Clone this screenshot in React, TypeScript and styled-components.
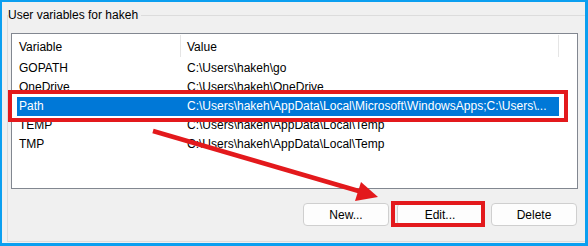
import React from "react";
import styled, { createGlobalStyle } from "styled-components";

const Global = createGlobalStyle`
  html, body { margin: 0; padding: 0; background: #f0f0f0; }
  body { font-family: "Liberation Sans", Arial, sans-serif; font-size: 12px; color: #000; }
`;

const Frame = styled.div`
  position: relative;
  width: 588px;
  height: 246px;
  box-sizing: border-box;
  border-style: solid;
  border-color: #0b9ff0;
  border-width: 2px 3px 3px 2px;
  background: #f0f0f0;
  overflow: hidden;
  display: flex;
  flex-direction: column;
`;

const Group = styled.fieldset`
  margin: 5px 0 1px 5px;
  padding: 0;
  border: 1px solid #dcdcdc;
  border-right: none;
  flex: 1;
  min-width: 0;
  display: flex;
  flex-direction: column;
`;

const Legend = styled.legend`
  padding: 0 3px 0 0;
  line-height: 16px;
  font-size: 12px;
  color: #000;
`;

const ListBox = styled.div`
  margin: 10px 7px 0 3px;
  height: 156px;
  box-sizing: border-box;
  border: 1px solid #828790;
  background: #fff;
  display: flex;
  flex-direction: column;
`;

const Header = styled.div`
  display: flex;
  height: 25px;
  align-items: stretch;
`;

const HeaderCell = styled.div<{ $w: number; $pad: number }>`
  width: ${(p) => p.$w}px;
  padding-left: ${(p) => p.$pad}px;
  box-sizing: border-box;
  display: flex;
  align-items: center;
`;

const Divider = styled.div`
  width: 1px;
  margin: 1px 0 2px;
  background: #e5e5e5;
`;

const Row = styled.div<{ $selected?: boolean }>`
  display: grid;
  grid-template-columns: 164px 378px;
  height: 19px;
  line-height: 19px;
  margin-left: 5px;
  width: 542px;
  white-space: nowrap;
  background: ${(p) => (p.$selected ? "#0078d7" : "transparent")};
  color: ${(p) => (p.$selected ? "#fff" : "#000")};
`;

const Cell = styled.div<{ $pad: number }>`
  padding-left: ${(p) => p.$pad}px;
  overflow: hidden;
`;

const ButtonRow = styled.div`
  display: flex;
  justify-content: flex-end;
  gap: 8px;
  margin: 14px 8px 0 0;
`;

const Button = styled.button`
  width: 86px;
  height: 23px;
  box-sizing: border-box;
  border: 1px solid #cfcfcf;
  border-radius: 4px;
  background: #fdfdfd;
  font-family: "Liberation Sans", Arial, sans-serif;
  font-size: 12px;
  color: #000;
  padding: 0;
`;

const Callout = styled.div<{ $x: number; $y: number; $w: number; $h: number }>`
  position: absolute;
  left: ${(p) => p.$x}px;
  top: ${(p) => p.$y}px;
  width: ${(p) => p.$w}px;
  height: ${(p) => p.$h}px;
  box-sizing: border-box;
  border: 4px solid #e3191c;
  pointer-events: none;
`;

const ArrowLayer = styled.svg`
  position: absolute;
  left: -2px;
  top: -2px;
  width: 588px;
  height: 246px;
  pointer-events: none;
`;

const rows = [
  { name: "GOPATH", value: "C:\\Users\\hakeh\\go" },
  { name: "OneDrive", value: "C:\\Users\\hakeh\\OneDrive" },
  { name: "Path", value: "C:\\Users\\hakeh\\AppData\\Local\\Microsoft\\WindowsApps;C:\\Users\\...", selected: true },
  { name: "TEMP", value: "C:\\Users\\hakeh\\AppData\\Local\\Temp" },
  { name: "TMP", value: "C:\\Users\\hakeh\\AppData\\Local\\Temp" },
];

export default function App() {
  return (
    <>
      <Global />
      <Frame>
        <Group>
          <Legend>User variables for hakeh</Legend>
          <ListBox>
            <Header>
              <HeaderCell $w={168} $pad={7}>Variable</HeaderCell>
              <Divider />
              <HeaderCell $w={377} $pad={6}>Value</HeaderCell>
              <Divider />
            </Header>
            {rows.map((r) => (
              <Row key={r.name} $selected={r.selected}>
                <Cell $pad={2}>{r.name}</Cell>
                <Cell $pad={6}>{r.value}</Cell>
              </Row>
            ))}
          </ListBox>
          <ButtonRow>
            <Button>New...</Button>
            <Button>Edit...</Button>
            <Button>Delete</Button>
          </ButtonRow>
        </Group>
        <Callout $x={6} $y={88} $w={560} $h={32} />
        <Callout $x={389} $y={199} $w={94} $h={26} />
        <ArrowLayer viewBox="0 0 588 246">
          <line x1="153" y1="131" x2="362" y2="192" stroke="#e3191c" strokeWidth="4.5" />
          <polygon points="378,197 361,182 355,201" fill="#e3191c" />
        </ArrowLayer>
      </Frame>
    </>
  );
}
